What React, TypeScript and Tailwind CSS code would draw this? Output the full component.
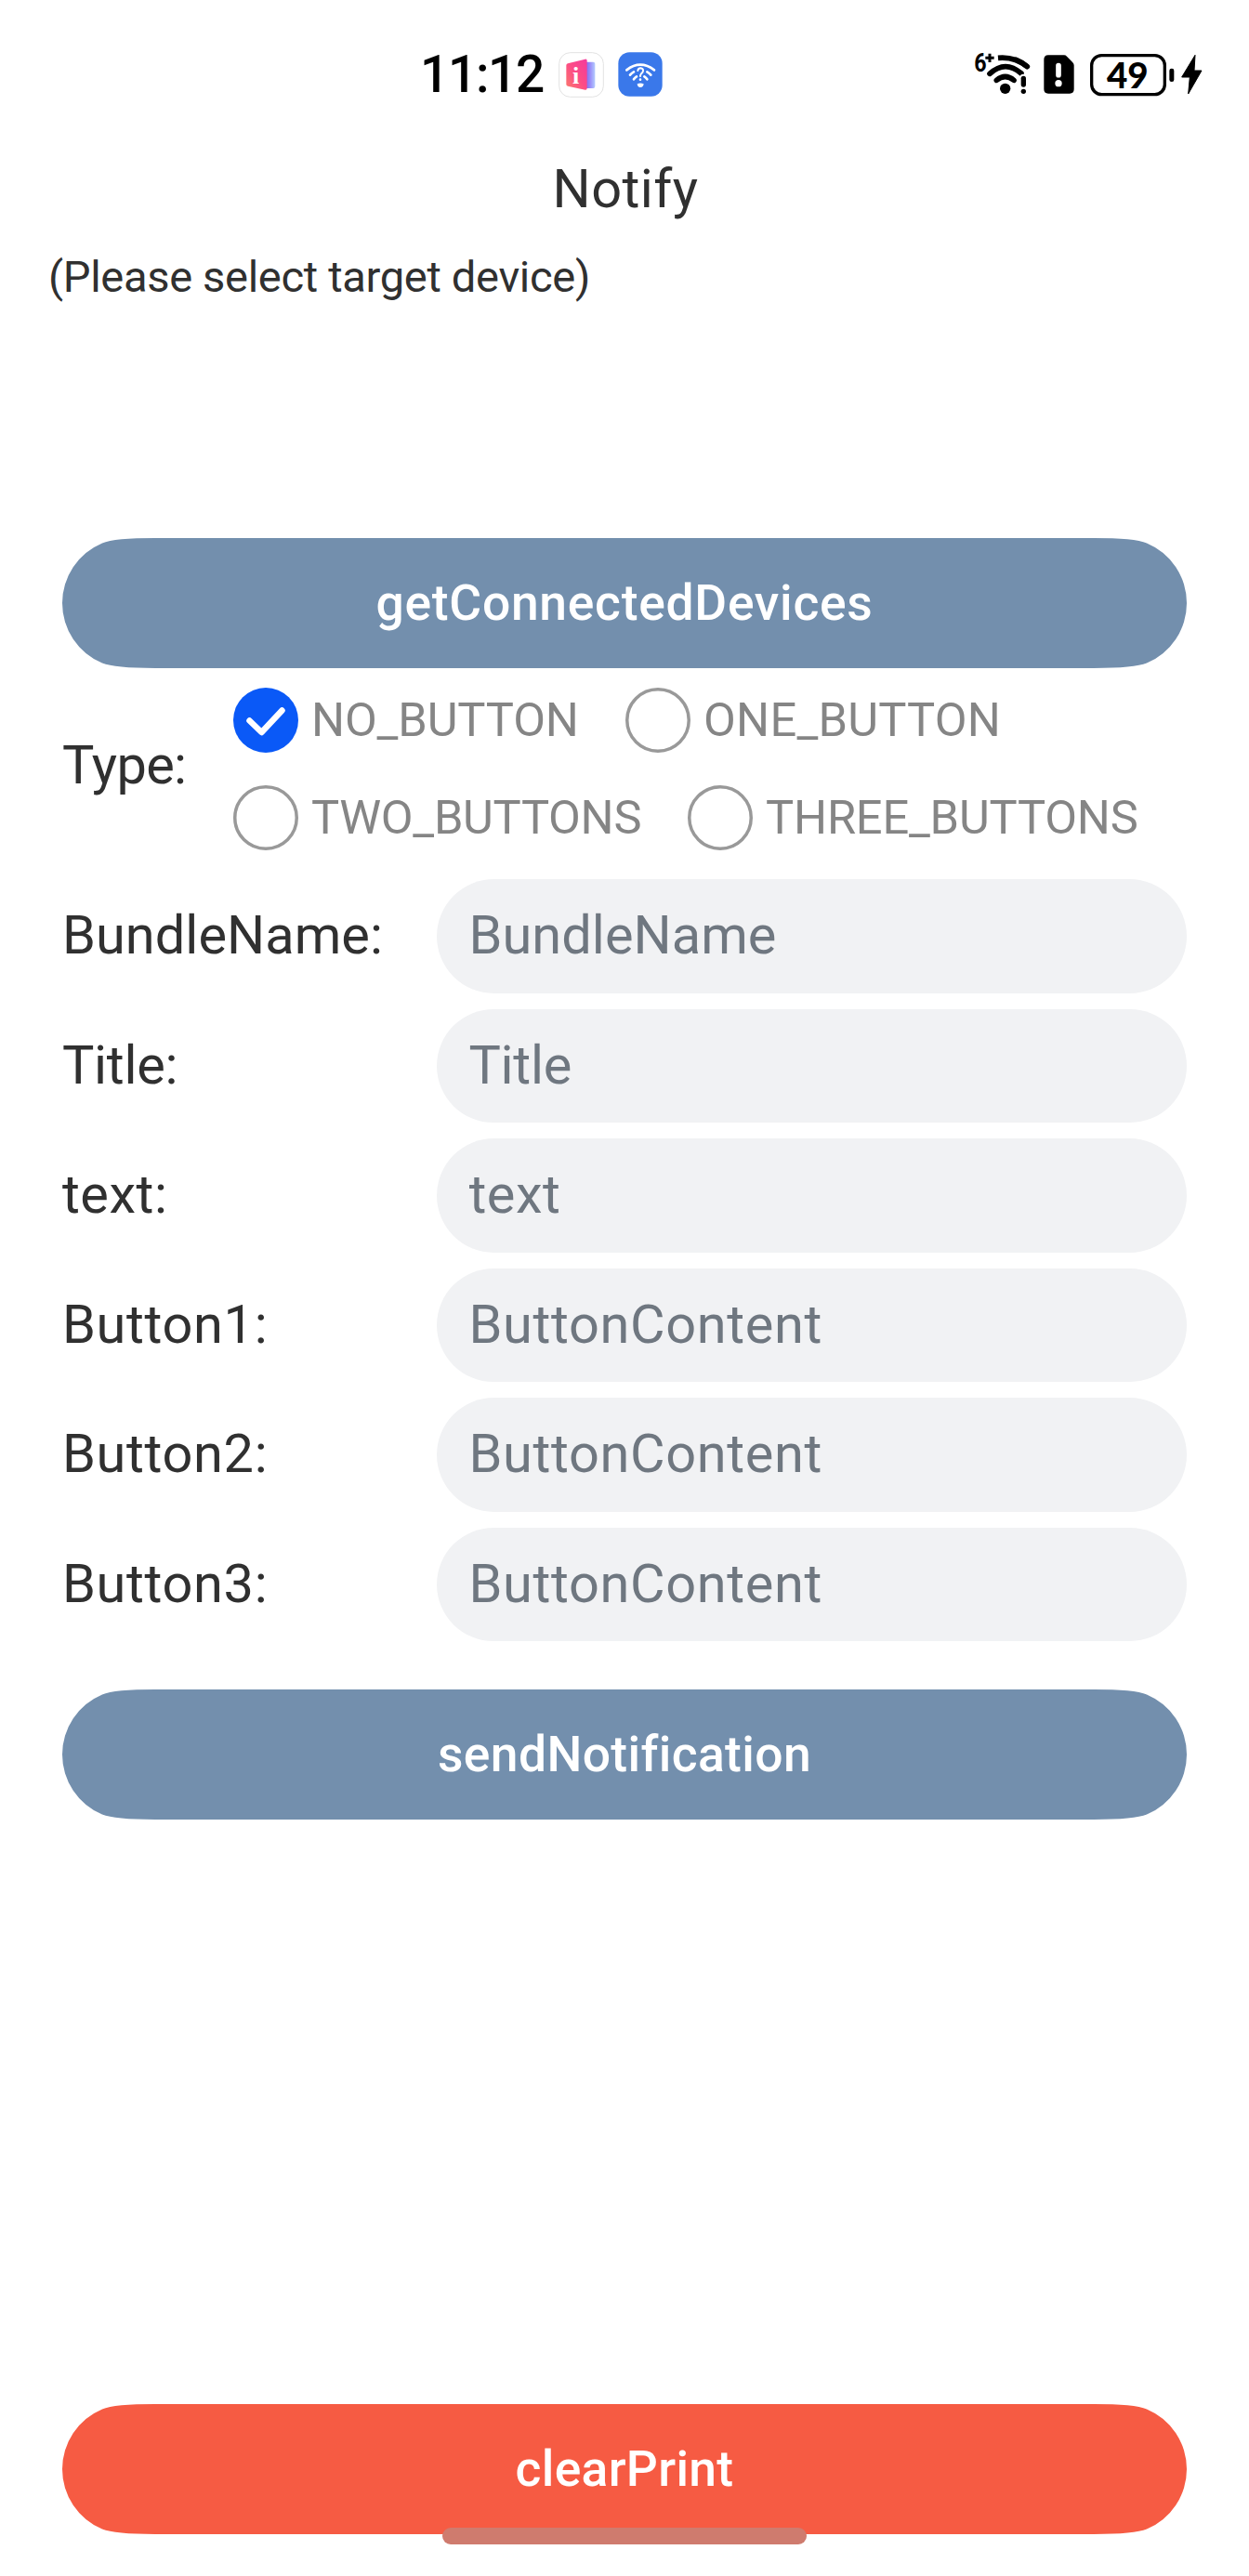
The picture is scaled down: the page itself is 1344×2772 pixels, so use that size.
import React from 'react';

type Option = { label: string; width: string; tracking: string; checked?: boolean };

const optionRows: Option[][] = [
  [
    { label: 'NO_BUTTON', width: 'w-[422px]', tracking: 'tracking-[-0.14px]', checked: true },
    { label: 'ONE_BUTTON', width: 'w-[489px]', tracking: 'tracking-[0.24px]' },
  ],
  [
    { label: 'TWO_BUTTONS', width: 'w-[489px]', tracking: 'tracking-[-0.3px]' },
    { label: 'THREE_BUTTONS', width: 'w-[489px]', tracking: 'tracking-[-0.2px]' },
  ],
];

const fields = [
  { label: 'BundleName:', placeholder: 'BundleName', tracking: 'tracking-[0.05px]' },
  { label: 'Title:', placeholder: 'Title', tracking: 'tracking-[-0.3px]' },
  { label: 'text:', placeholder: 'text', tracking: 'tracking-[0.5px]' },
  { label: 'Button1:', placeholder: 'ButtonContent', tracking: 'tracking-[0.65px]' },
  { label: 'Button2:', placeholder: 'ButtonContent', tracking: 'tracking-[0.65px]' },
  { label: 'Button3:', placeholder: 'ButtonContent', tracking: 'tracking-[0.65px]' },
];

function InfoAppIcon() {
  return (
    <svg className="h-[49px] w-[49px]" viewBox="484 48 147 147">
      <defs>
        <linearGradient id="pinkPage" x1="0" y1="1" x2="1" y2="0">
          <stop offset="0" stopColor="#fb7a6c" />
          <stop offset="0.5" stopColor="#fc4c86" />
          <stop offset="1" stopColor="#f53a9c" />
        </linearGradient>
        <linearGradient id="bluePage" x1="0" y1="0" x2="1" y2="0">
          <stop offset="0" stopColor="#7c62ee" />
          <stop offset="0.5" stopColor="#9a8cf8" />
          <stop offset="1" stopColor="#b4ccff" />
        </linearGradient>
      </defs>
      <rect x="486" y="50" width="143" height="143" rx="36" fill="#fff" stroke="#e2e2e2" strokeWidth="3" />
      <path d="M570 80H596Q602 80 602 86V158Q602 165 596 165H570Z" fill="url(#bluePage)" />
      <path d="M514 85L570 71Q576 70 576 76V165Q576 171 570 170L514 158Q509 157 509 152V91Q509 86 514 85Z" fill="url(#pinkPage)" />
      <text x="540" y="150" textAnchor="middle" fontFamily="Liberation Serif, serif" fontWeight="700" fontSize="78" fill="#fff">i</text>
    </svg>
  );
}

function WifiAppIcon() {
  return (
    <svg className="h-[48px] w-[48px]" viewBox="674 49 144 144">
      <rect x="675" y="50" width="142" height="142" rx="36" fill="#3a78ea" />
      <g fill="none" stroke="#fff" strokeWidth="8" strokeLinecap="round">
        <path d="M702 107Q746 73 791 107" />
        <path d="M713 123Q718 117 725 113" />
        <path d="M780 123Q775 117 768 113" />
        <path d="M725 137Q729 131 734 128" />
        <path d="M768 137Q764 131 759 128" />
        <path d="M738 109Q739 101 747 101Q756 102 755 110Q754 115 749 119Q746 122 746 127" strokeWidth="6" />
      </g>
      <circle cx="746" cy="138" r="4" fill="#fff" />
      <path d="M736 152Q746 147 757 152Q756 163 746 163Q737 163 736 152Z" fill="#fff" />
    </svg>
  );
}

function WifiIcon() {
  return (
    <svg className="h-[64px] w-[64px]" viewBox="54 24 192 192">
      <text x="55" y="112" fontFamily="Roboto, sans-serif" fontWeight="700" fontSize="84" textLength="40" lengthAdjust="spacingAndGlyphs">6</text>
      <path d="M91 67H119M105 53V81" stroke="#000" strokeWidth="9" />
      <g fill="none" stroke="#000" strokeWidth="17">
        <path d="M132 67Q186 62 226 95" />
        <path d="M190 73Q210 81 226 95" strokeLinecap="round" />
        <path d="M105 118Q155 72 207 117" strokeLinecap="round" />
        <path d="M127 139Q155 116 183 139" strokeLinecap="round" />
      </g>
      <circle cx="155" cy="166" r="17" />
      <path d="M214 131V153" stroke="#fff" strokeWidth="24" strokeLinecap="round" />
      <path d="M214 133V153" stroke="#000" strokeWidth="16" strokeLinecap="round" />
      <circle cx="214" cy="175" r="8" />
    </svg>
  );
}

function SimAlertIcon() {
  return (
    <svg className="ml-[10px] h-[64px] w-[35px]" viewBox="276 24 105 192">
      <path d="M294 58H345Q350 58 354 62L373 82Q377 86 377 91V168Q377 182 363 182H294Q280 182 280 168V72Q280 58 294 58Z" />
      <path d="M327 92V122" stroke="#fff" strokeWidth="17" strokeLinecap="round" />
      <circle cx="327" cy="149" r="11" fill="#fff" />
    </svg>
  );
}

function BatteryIcon() {
  return (
    <svg className="ml-[15px] h-[64px] w-[94px]" viewBox="426 24 282 192">
      <rect x="434" y="59" width="236" height="126" rx="32" fill="none" stroke="#000" strokeWidth="10" />
      <rect x="685" y="101" width="15" height="43" rx="7" />
      <text x="483" y="165" fontFamily="Lato, sans-serif" fontWeight="900" fontSize="115" textLength="134" lengthAdjust="spacingAndGlyphs">49</text>
    </svg>
  );
}

function BoltIcon() {
  return (
    <svg className="ml-[4px] h-[64px] w-[24px]" viewBox="720 24 72 192">
      <path d="M768 58L725 129H751L746 183L789 108H765Z" stroke="#000" strokeWidth="3" strokeLinejoin="round" />
    </svg>
  );
}

function StatusBar() {
  return (
    <header className="flex h-[160px] items-center pr-[50px] pl-[452px]">
      <div className="w-[149px] text-[55px] leading-none font-medium tracking-[-1.3px] text-black">11:12</div>
      <InfoAppIcon />
      <div className="ml-[15px]">
        <WifiAppIcon />
      </div>
      <div className="ml-auto flex items-center">
        <WifiIcon />
        <SimAlertIcon />
        <BatteryIcon />
        <BoltIcon />
      </div>
    </header>
  );
}

function Radio({ option }: { option: Option }) {
  return (
    <div className={`flex h-[70px] shrink-0 items-center gap-[14px] ${option.width}`}>
      {option.checked ? (
        <svg className="h-[70px] w-[70px]" viewBox="0 0 70 70">
          <circle cx="35" cy="35" r="35" fill="#0a59f7" />
          <path d="M17.500 35.500L30.500 48L52.500 24.500" fill="none" stroke="#fff" strokeWidth="6.500" strokeLinecap="round" strokeLinejoin="round" />
        </svg>
      ) : (
        <svg className="h-[70px] w-[70px]" viewBox="0 0 70 70">
          <circle cx="35" cy="35" r="33.25" fill="none" stroke="#999999" strokeWidth="3.5" />
        </svg>
      )}
      <span className={`text-[50.6px] leading-none text-[#858585] ${option.tracking}`}>{option.label}</span>
    </div>
  );
}

// Full-width pill whose ends ease gradually into the straight edges.
function PillButton({ label, className }: { label: string; className: string }) {
  return (
    <button
      className={`h-[140px] w-[1210px] text-[53.4px] leading-none font-medium text-white [clip-path:path('M0_70A70_70_0_0_1_43_5.4Q56_0_100_0H1110Q1154_0_1167_5.4A70_70_0_0_1_1210_70A70_70_0_0_1_1167_134.6Q1154_140_1110_140H100Q56_140_43_134.6A70_70_0_0_1_0_70Z')] ${className}`}
    >
      {label}
    </button>
  );
}

export default function App() {
  return (
    <div className="relative h-[2772px] w-[1344px] overflow-hidden bg-white font-['Roboto',sans-serif] text-[#303030]">
      <StatusBar />
      <h1 className="flex h-[86px] items-center justify-center pt-[2px] pl-[2px] text-[57.7px] leading-none tracking-[0.41px]">Notify</h1>
      <p className="flex h-[104px] items-center pl-[52px] text-[47.1px] leading-none tracking-[-0.34px]">(Please select target device)</p>

      <main className="flex flex-col px-[67px] pt-[229px]">
        <PillButton label="getConnectedDevices" className="bg-[#738fad] tracking-[0.72px]" />

        <section className="flex items-center pt-[21px]">
          <div className="w-[184px] pb-[8px] text-[57.7px] leading-none tracking-[-0.65px]">Type:</div>
          <div className="flex flex-col gap-[35px]">
            {optionRows.map((row, i) => (
              <div key={i} className="flex">
                {row.map((option) => (
                  <Radio key={option.label} option={option} />
                ))}
              </div>
            ))}
          </div>
        </section>

        <section className="flex flex-col gap-[17px] pt-[31px]">
          {fields.map((field) => (
            <label key={field.label} className={`flex h-[122.5px] items-center text-[57.7px] ${field.tracking}`}>
              <span className="w-[403px] shrink-0 leading-none">{field.label}</span>
              <input
                className="h-[122.5px] w-[807px] rounded-full bg-[#f1f2f4] pb-[2px] pl-[34.5px] placeholder:text-[#6f7780]"
                placeholder={field.placeholder}
              />
            </label>
          ))}
        </section>

        <PillButton label="sendNotification" className="mt-[52px] bg-[#738fad] tracking-[0.38px]" />
        <PillButton label="clearPrint" className="mt-[629px] bg-[#f65b43] tracking-[0.31px]" />
      </main>

      <div className="absolute top-[2720px] left-[476px] h-[18px] w-[392px] rounded-full bg-[#cf7b6e]" />
    </div>
  );
}
